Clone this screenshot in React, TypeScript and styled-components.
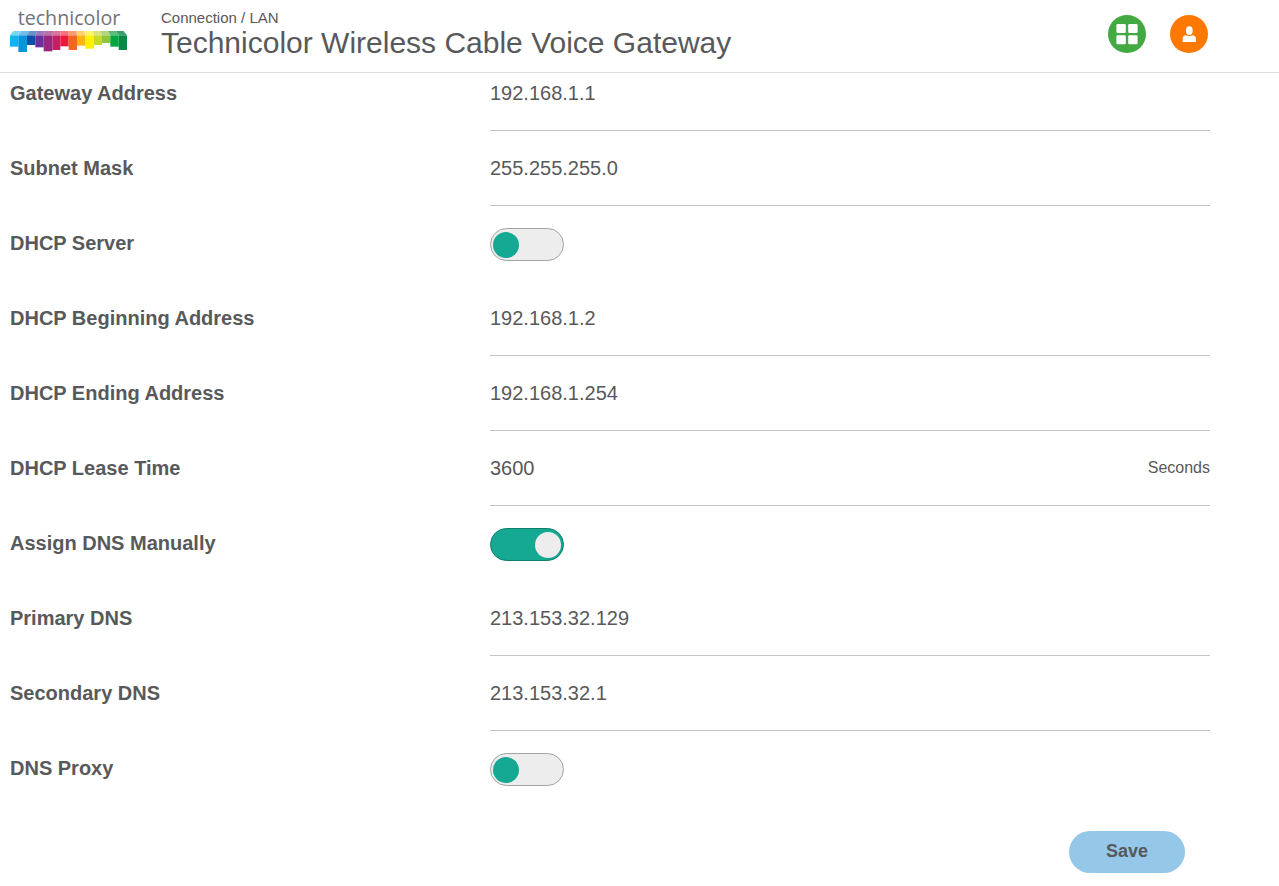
import React, { useState } from "react";
import styled, { createGlobalStyle } from "styled-components";

const GlobalStyle = createGlobalStyle`
  *, *::before, *::after { box-sizing: border-box; }
  body {
    margin: 0;
    background: #fff;
    color: #58595b;
    font-family: "Liberation Sans", Arial, sans-serif;
  }
`;

const Header = styled.header`
  border-bottom: 1px solid #dcdcdc;
`;

const HeaderInner = styled.div`
  display: flex;
  align-items: flex-start;
  width: 100%;
  max-width: 1220px;
  height: 72px;
  padding: 0 12px 0 8px;
`;

const LogoLink = styled.a`
  display: block;
  width: 122px;
  height: 54px;
  margin-right: 31px;
`;

const Heading = styled.div`
  flex: 1;
  padding-top: 9px;
`;

const Breadcrumb = styled.nav`
  font-size: 15px;
  line-height: 18px;
`;

const CrumbLink = styled.a`
  color: inherit;
  text-decoration: none;
`;

const Title = styled.h1`
  margin: 0;
  font-size: 30px;
  font-weight: 400;
  line-height: 32px;
`;

const Actions = styled.div`
  display: flex;
  gap: 24px;
  padding-top: 15px;
`;

const RoundButton = styled.button<{ $color: string }>`
  display: flex;
  align-items: center;
  justify-content: center;
  width: 38px;
  height: 38px;
  padding: 0;
  border: 0;
  border-radius: 50%;
  background: ${(p) => p.$color};
  cursor: pointer;
`;

const Form = styled.form`
  display: flex;
  flex-direction: column;
  gap: 22px;
  width: 100%;
  max-width: 1220px;
  padding: 5px 10px 12px;
`;

const Row = styled.div`
  display: grid;
  grid-template-columns: 2fr 3fr;
  align-items: start;
  min-height: 53px;
`;

const Label = styled.label`
  font-size: 20px;
  font-weight: 700;
  line-height: 30px;
`;

const Field = styled.div`
  display: flex;
  align-items: center;
  padding-bottom: 22px;
  border-bottom: 1px solid #c4c4c4;
`;

const TextInput = styled.input`
  flex: 1;
  min-width: 0;
  height: 30px;
  padding: 0;
  border: 0;
  outline: 0;
  background: transparent;
  color: inherit;
  font: inherit;
  font-size: 20px;
`;

const Unit = styled.span`
  font-size: 16px;
  line-height: 20px;
`;

const Switch = styled.input`
  appearance: none;
  display: flex;
  align-items: center;
  width: 74px;
  height: 33px;
  margin: 0;
  padding: 1px 2px 0;
  border: 1px solid #a3a3a3;
  border-radius: 17px;
  background: #ededed;
  cursor: pointer;

  &::before {
    content: "";
    width: 26px;
    height: 26px;
    border-radius: 50%;
    background: #15a892;
  }

  &:checked {
    justify-content: flex-end;
    border-color: #0d7d6c;
    background: #15a892;
  }

  &:checked::before {
    background: #ededed;
  }
`;

const Footer = styled.div`
  display: flex;
  justify-content: flex-end;
  padding: 3px 25px 0 0;
`;

const SaveButton = styled.button`
  width: 116px;
  height: 42px;
  padding: 0 0 2px;
  border: 0;
  border-radius: 21px;
  background: #94c7e8;
  color: #58595b;
  font: inherit;
  font-size: 18px;
  font-weight: 700;
  cursor: pointer;
`;

const bars = [
  { x: 30, end: 55, bottom: 140, color: "#12b3ee", top: "#7fd3f3" },
  { x: 55, end: 81, bottom: 156, color: "#0a94dc", top: "#6fbde8" },
  { x: 81, end: 106, bottom: 135, color: "#0b50a8", top: "#6b90c8" },
  { x: 106, end: 131, bottom: 142, color: "#6a2f9c", top: "#9d78bd" },
  { x: 131, end: 157, bottom: 154, color: "#97287f", top: "#b970aa" },
  { x: 157, end: 181, bottom: 150, color: "#c32165", top: "#d97399" },
  { x: 181, end: 206, bottom: 139, color: "#ee1838", top: "#f4727f" },
  { x: 206, end: 231, bottom: 150, color: "#f26522", top: "#f79c72" },
  { x: 231, end: 256, bottom: 137, color: "#fdb515", top: "#fdd071" },
  { x: 256, end: 282, bottom: 146, color: "#fff000", top: "#fff36c" },
  { x: 282, end: 306, bottom: 135, color: "#c5d92d", top: "#d9e57b" },
  { x: 306, end: 331, bottom: 129, color: "#8dc63f", top: "#b2d77d" },
  { x: 331, end: 356, bottom: 140, color: "#00a63f", top: "#57bd79" },
  { x: 356, end: 381, bottom: 150, color: "#058a46", top: "#3d9f6a" },
];

// The upper faces lean toward the middle of the logo.
const lean = (x: number) => 205.5 + (x - 205.5) * 0.94;

function Logo() {
  return (
    <svg width="122" height="54" viewBox="24 0 366 162" role="img" aria-label="technicolor">
      <text
        x="53"
        y="74"
        fill="#727376"
        fontFamily='"Open Sans", "Noto Sans", sans-serif'
        fontSize="59"
      >
        technicolor
      </text>
      {bars.map((b) => (
        <g key={b.x}>
          <polygon
            points={`${lean(b.x)},93 ${lean(b.end)},93 ${b.end},106 ${b.x},106`}
            fill={b.top}
          />
          <rect x={b.x} y="106" width={b.end - b.x} height={b.bottom - 106} fill={b.color} />
        </g>
      ))}
    </svg>
  );
}

function TilesIcon() {
  return (
    <svg width="22" height="22" viewBox="0 0 22 22" fill="#fff" aria-hidden="true">
      <rect x="0.4" y="1" width="9.4" height="9" rx="1.2" />
      <rect x="12.2" y="1" width="9.4" height="9" rx="1.2" />
      <rect x="0.4" y="12.3" width="9.4" height="9" rx="1.2" />
      <rect x="12.2" y="12.3" width="9.4" height="9" rx="1.2" />
    </svg>
  );
}

function PersonIcon() {
  return (
    <svg width="14" height="16" viewBox="0 0 14 16" fill="#fff" aria-hidden="true">
      <ellipse cx="7.3" cy="4.6" rx="3.4" ry="4.4" />
      <path d="M0.7 16V12.2C0.7 10.6 1.8 9.6 3.6 9.2C5.6 10.3 9 10.3 11 9.2C12.8 9.6 13.9 10.6 13.9 12.2V16Z" />
    </svg>
  );
}

function TextRow(props: { id: string; label: string; value: string; unit?: string }) {
  const [value, setValue] = useState(props.value);
  return (
    <Row>
      <Label htmlFor={props.id}>{props.label}</Label>
      <Field>
        <TextInput
          id={props.id}
          type="text"
          value={value}
          onChange={(e) => setValue(e.target.value)}
        />
        {props.unit && <Unit>{props.unit}</Unit>}
      </Field>
    </Row>
  );
}

function SwitchRow(props: { id: string; label: string; on?: boolean }) {
  return (
    <Row>
      <Label htmlFor={props.id}>{props.label}</Label>
      <Switch id={props.id} type="checkbox" role="switch" defaultChecked={props.on} />
    </Row>
  );
}

export default function App() {
  return (
    <>
      <GlobalStyle />
      <Header>
        <HeaderInner>
          <LogoLink href="#home">
            <Logo />
          </LogoLink>
          <Heading>
            <Breadcrumb>
              <CrumbLink href="#connection">Connection</CrumbLink> / LAN
            </Breadcrumb>
            <Title>Technicolor Wireless Cable Voice Gateway</Title>
          </Heading>
          <Actions>
            <RoundButton type="button" $color="#43a942" aria-label="Menu">
              <TilesIcon />
            </RoundButton>
            <RoundButton type="button" $color="#ff7900" aria-label="Account">
              <PersonIcon />
            </RoundButton>
          </Actions>
        </HeaderInner>
      </Header>
      <main>
        <Form onSubmit={(e) => e.preventDefault()}>
          <TextRow id="gateway" label="Gateway Address" value="192.168.1.1" />
          <TextRow id="mask" label="Subnet Mask" value="255.255.255.0" />
          <SwitchRow id="dhcp" label="DHCP Server" />
          <TextRow id="dhcp-begin" label="DHCP Beginning Address" value="192.168.1.2" />
          <TextRow id="dhcp-end" label="DHCP Ending Address" value="192.168.1.254" />
          <TextRow id="lease" label="DHCP Lease Time" value="3600" unit="Seconds" />
          <SwitchRow id="manual-dns" label="Assign DNS Manually" on />
          <TextRow id="dns1" label="Primary DNS" value="213.153.32.129" />
          <TextRow id="dns2" label="Secondary DNS" value="213.153.32.1" />
          <SwitchRow id="proxy" label="DNS Proxy" />
          <Footer>
            <SaveButton type="submit">Save</SaveButton>
          </Footer>
        </Form>
      </main>
    </>
  );
}
